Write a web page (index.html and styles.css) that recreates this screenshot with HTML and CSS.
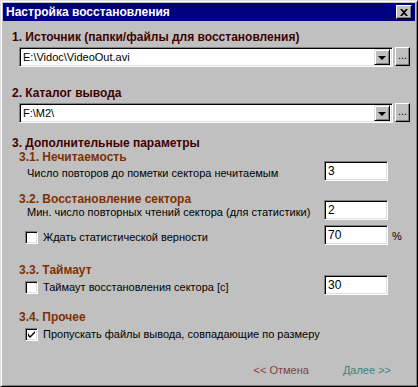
FILE: index.html
```html
<!DOCTYPE html>
<html>
<head>
    <title>Настройка восстановления</title>
    <link rel="stylesheet" href="styles.css">
</head>
<body>

<div class="window">
    <div class="titlebar">
        <span class="title">Настройка восстановления</span>
        <button class="close">
            <svg width="8" height="7" viewBox="0 0 8 7"><path d="M0 0h2l2 2 2-2h2L5 3.5 8 7H6L4 5 2 7H0l3-3.5z" fill="#000"/></svg>
        </button>
    </div>

    <div class="content">
        <div class="section">1. Источник (папки/файлы для восстановления)</div>
        <div class="pathrow">
            <div class="combo">
                <span class="combo-text">E:\Vidoc\VideoOut.avi</span>
                <span class="drop"><i class="arrow"></i></span>
            </div>
            <button class="browse">...</button>
        </div>

        <div class="section second">2. Каталог вывода</div>
        <div class="pathrow">
            <div class="combo">
                <span class="combo-text">F:\M2\</span>
                <span class="drop"><i class="arrow"></i></span>
            </div>
            <button class="browse">...</button>
        </div>

        <div class="section third">3. Дополнительные параметры</div>

        <div class="sub first">3.1. Нечитаемость</div>
        <div class="opt">
            <span class="label">Число повторов до пометки сектора нечитаемым</span>
            <span class="field">3</span>
        </div>

        <div class="sub">3.2. Восстановление сектора</div>
        <div class="opt up">
            <span class="label">Мин. число повторных чтений сектора (для статистики)</span>
            <span class="field">2</span>
        </div>
        <div class="opt tight">
            <span class="label"><span class="check"></span>Ждать статистической верности</span>
            <span class="field">70</span>
            <span class="unit">%</span>
        </div>

        <div class="sub wide">3.3. Таймаут</div>
        <div class="opt near">
            <span class="label"><span class="check"></span>Таймаут восстановления сектора [с]</span>
            <span class="field">30</span>
        </div>

        <div class="sub mid">3.4. Прочее</div>
        <div class="opt flat">
            <span class="label"><span class="check on">
                <svg width="7" height="7" viewBox="0 0 7 7"><path d="M0 2v3l2 2 5-5V0L2 5z" fill="#000"/></svg>
            </span>Пропускать файлы вывода, совпадающие по размеру</span>
        </div>

        <div class="footer">
            <span class="link back">&lt;&lt; Отмена</span>
            <span class="link next">Далее &gt;&gt;</span>
        </div>
    </div>
</div>

</body>
</html>
```

FILE: styles.css
```css
body {
    margin: 0;
    background-color: #c0c0c0;
    font-family: "Liberation Sans", Arial, sans-serif;
    font-size: 11px;
}

.window {
    box-sizing: border-box;
    width: 418px;
    height: 387px;
    padding: 3px;
    background-color: #c0c0c0;
    border: 1px solid;
    border-color: #dfdfdf #000 #000 #dfdfdf;
    box-shadow: inset 1px 1px 0 #fff, inset -1px -1px 0 #808080;
}

.titlebar {
    display: flex;
    align-items: center;
    justify-content: space-between;
    height: 18px;
    margin: -1px -1px 0 -1px;
    padding: 0 3px 0 3px;
    background-color: #000080;
}

.title {
    color: #fff;
    font-weight: bold;
    font-size: 12px;
}

.close {
    display: flex;
    align-items: center;
    justify-content: center;
    width: 16px;
    height: 14px;
    padding: 0;
    background-color: #c0c0c0;
    border: 1px solid;
    border-color: #fff #000 #000 #fff;
    box-shadow: inset -1px -1px 0 #808080;
}

.content {
    padding: 0 0 0 8px;
}

.section {
    margin-top: 9px;
    height: 14px;
    line-height: 14px;
    color: #400000;
    font-weight: bold;
    font-size: 12px;
}

.section.second {
    margin-top: 19px;
}

.section.third {
    margin-top: 13px;
}

.pathrow {
    display: flex;
    gap: 2px;
    margin: 3px 0 0 7px;
}

.combo {
    box-sizing: border-box;
    display: flex;
    align-items: center;
    justify-content: space-between;
    width: 374px;
    height: 20px;
    padding: 2px;
    background-color: #fff;
    border: 1px solid;
    border-color: #808080 #fff #fff #808080;
    box-shadow: inset 1px 1px 0 #000, inset -1px -1px 0 #dfdfdf;
}

.combo-text {
    padding-left: 1px;
}

.drop {
    box-sizing: border-box;
    display: flex;
    align-items: center;
    justify-content: center;
    width: 16px;
    height: 16px;
    background-color: #c0c0c0;
    border: 1px solid;
    border-color: #dfdfdf #000 #000 #dfdfdf;
    box-shadow: inset 1px 1px 0 #fff, inset -1px -1px 0 #808080;
}

.arrow {
    width: 0;
    height: 0;
    border-left: 4px solid transparent;
    border-right: 4px solid transparent;
    border-top: 4px solid #000;
    margin-top: 1px;
}

.browse {
    box-sizing: border-box;
    width: 15px;
    height: 19px;
    padding: 0 0 3px 0;
    background-color: #c0c0c0;
    border: 1px solid;
    border-color: #fff #000 #000 #fff;
    box-shadow: inset -1px -1px 0 #808080;
    font-family: "Liberation Sans", Arial, sans-serif;
    font-size: 11px;
    line-height: 14px;
    vertical-align: bottom;
}

.sub {
    margin: 11px 0 0 7px;
    height: 14px;
    line-height: 14px;
    color: #803000;
    font-weight: bold;
    font-size: 12px;
}

.sub.first {
    margin-top: 0;
}

.sub.wide {
    margin-top: 18px;
}

.sub.mid {
    margin-top: 15px;
}

.opt {
    display: grid;
    grid-template-columns: 297px 64px auto;
    align-items: end;
    margin-left: 15px;
    height: 20px;
    margin-top: -3px;
}

.opt.up {
    margin-top: -6px;
}

.opt.tight {
    margin-top: 5px;
}

.opt.near {
    margin-top: -2px;
}

.opt.flat {
    margin-top: 2px;
    height: 16px;
}

.label {
    display: flex;
    align-items: center;
    height: 16px;
    white-space: nowrap;
}

.check {
    box-sizing: border-box;
    display: flex;
    align-items: center;
    justify-content: center;
    width: 13px;
    height: 13px;
    margin: 0 5px 0 -2px;
    background-color: #fff;
    border: 1px solid;
    border-color: #808080 #fff #fff #808080;
    box-shadow: inset 1px 1px 0 #000, inset -1px -1px 0 #dfdfdf;
}

.field {
    box-sizing: border-box;
    height: 20px;
    padding: 2px 3px;
    background-color: #fff;
    border: 1px solid;
    border-color: #808080 #fff #fff #808080;
    box-shadow: inset 1px 1px 0 #000, inset -1px -1px 0 #dfdfdf;
    font-size: 12px;
    line-height: 15px;
}

.unit {
    padding: 0 0 3px 4px;
}

.footer {
    display: flex;
    justify-content: flex-end;
    gap: 34px;
    margin: 22px 23px 0 0;
}

.link {
    font-size: 11px;
}

.back {
    color: #804040;
}

.next {
    color: #408080;
}
```
